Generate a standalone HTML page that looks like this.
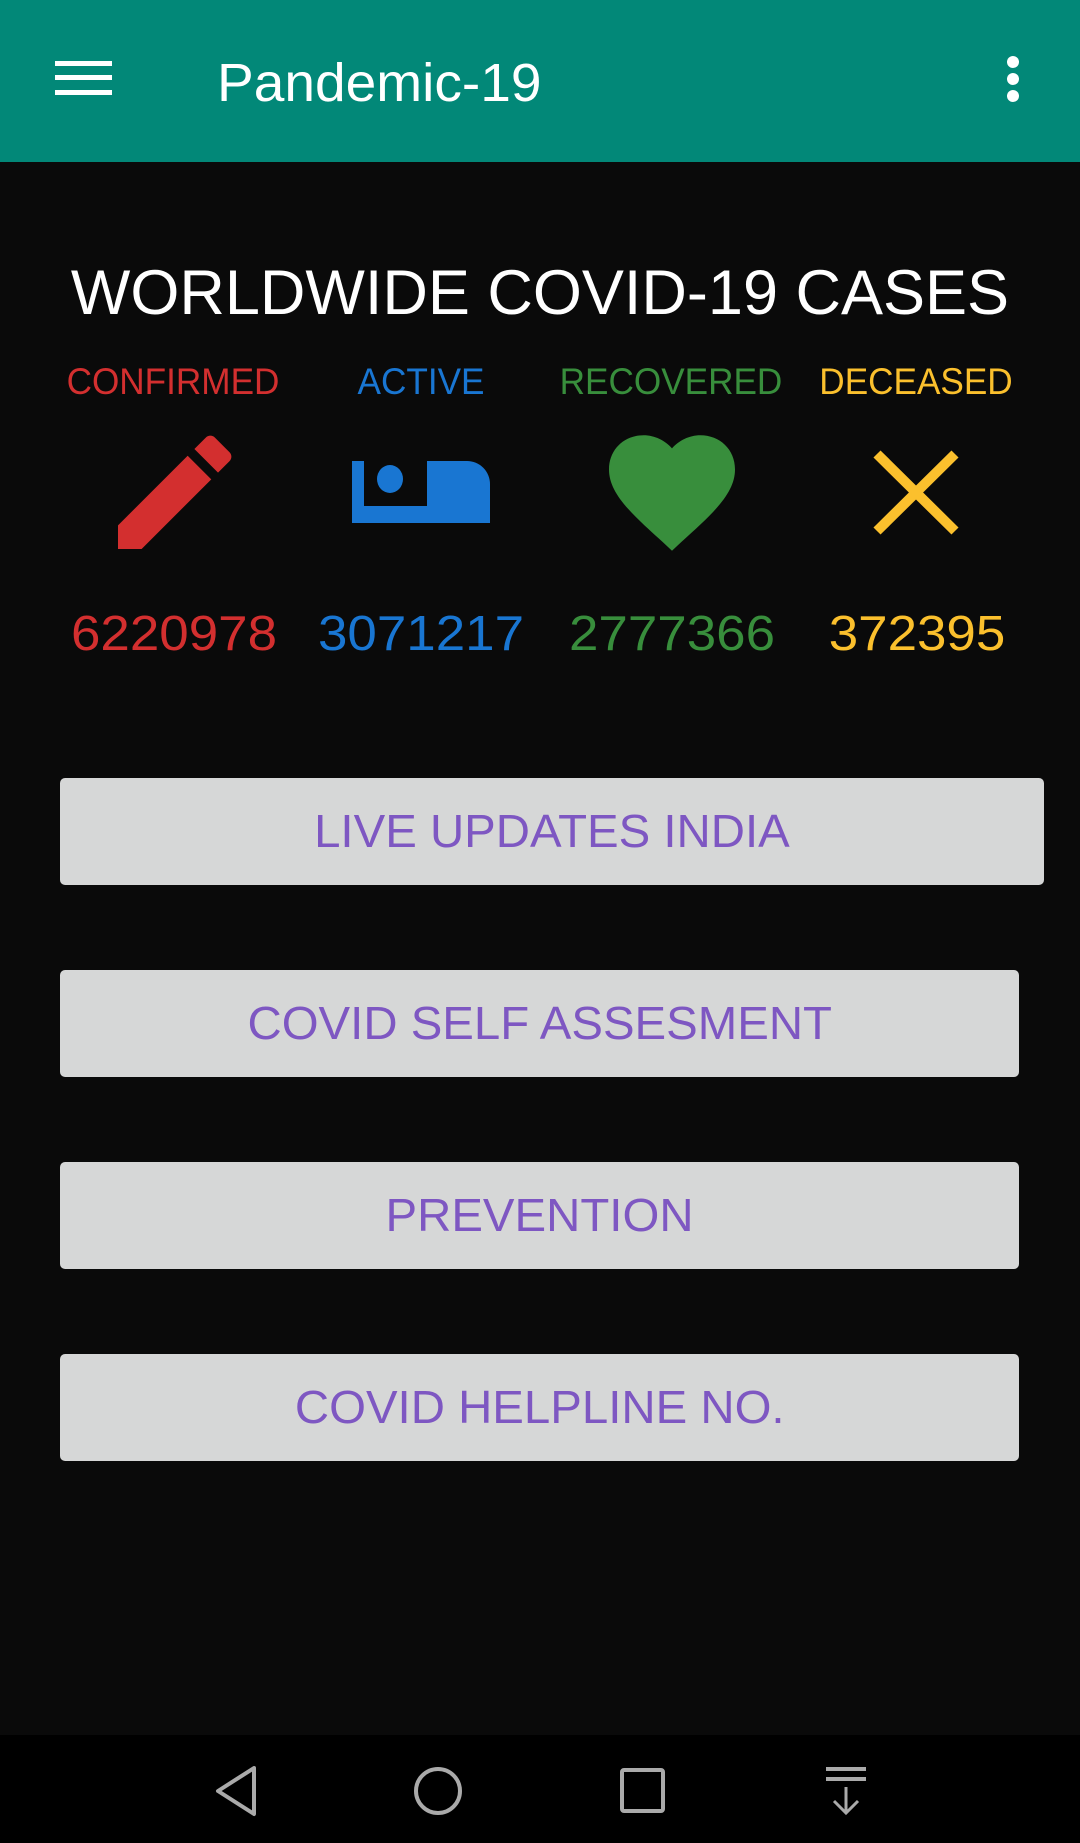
<!DOCTYPE html>
<html><head><meta charset="utf-8"><style>
*{margin:0;padding:0;box-sizing:border-box}
body{width:1080px;height:1843px;background:#0a0a0a;font-family:"Liberation Sans",sans-serif;position:relative;overflow:hidden}
.bar{position:absolute;left:0;top:0;width:1080px;height:162px;background:#028878}
.t{position:absolute;white-space:nowrap}
.c{transform:translateX(-50%) scaleX(0.95)}
.n{transform:translateX(-50%) scaleX(1.08);font-size:49px;top:606px}
.btn{position:absolute;left:60px;background:#d6d7d7;border-radius:5px;color:#7e57c2;font-size:46px;text-align:center;height:107px;line-height:107px}
.btn span{display:inline-block;transform:scaleX(1.03)}
.nav{position:absolute;left:0;top:1735px;width:1080px;height:108px;background:#000}
</style></head><body>
<div class="bar">
 <svg style="position:absolute;left:55px;top:58px" width="58" height="40"><rect x="0" y="3" width="57" height="5" fill="#fff"/><rect x="0" y="17" width="57" height="5" fill="#fff"/><rect x="0" y="32" width="57" height="5" fill="#fff"/></svg>
 <div class="t" style="left:217px;top:52px;font-size:54px;color:#fff;transform:scaleX(1.02);transform-origin:left">Pandemic-19</div>
 <svg style="position:absolute;left:1003px;top:54px" width="20" height="50"><circle cx="10" cy="8" r="6" fill="#fff"/><circle cx="10" cy="25" r="6" fill="#fff"/><circle cx="10" cy="42" r="6" fill="#fff"/></svg>
</div>
<div class="t" style="left:540px;top:257px;font-size:63px;color:#fff;transform:translateX(-50%)">WORLDWIDE COVID-19 CASES</div>
<div class="t c" style="left:173px;top:361px;font-size:37px;color:#d32f2f">CONFIRMED</div>
<div class="t c" style="left:421px;top:361px;font-size:37px;color:#1976d2">ACTIVE</div>
<div class="t c" style="left:671px;top:361px;font-size:37px;color:#388e3c">RECOVERED</div>
<div class="t c" style="left:916px;top:361px;font-size:37px;color:#fbc02d">DECEASED</div>
<svg style="position:absolute;left:118px;top:435px" width="114" height="114" viewBox="3 2.9 18.1 18.1"><path fill="#d32f2f" d="M3 17.25V21h3.75L17.81 9.94l-3.75-3.75L3 17.25z M20.71 7.04c.39-.39.39-1.02 0-1.41l-2.34-2.34c-.39-.39-1.02-.39-1.41 0l-1.83 1.830 3.75 3.75 1.83-1.83z"/></svg>
<svg style="position:absolute;left:352px;top:461px" width="138" height="62" viewBox="0 0 138 62"><path fill="#1976d2" d="M0 0h12v45h63V0h40a23 23 0 0 1 23 23v39H0z"/><ellipse cx="38" cy="18" rx="13" ry="14" fill="#1976d2"/></svg>
<svg style="position:absolute;left:609px;top:435px" width="126" height="116" viewBox="0 0 24 22"><path fill="#388e3c" d="M12 22l-1.7-1.6C4.2 14.9 0 11.1 0 6.5 0 2.7 2.9 0 6.6 0 8.7 0 10.7 1 12 2.5 13.3 1 15.3 0 17.4 0 21.1 0 24 2.7 24 6.5c0 4.6-4.2 8.4-10.3 13.9z"/></svg>
<svg style="position:absolute;left:872px;top:450px" width="88" height="85"><path d="M5 4L83 81M83 4L5 81" stroke="#fbc02d" stroke-width="10"/></svg>
<div class="t n" style="left:174px;color:#d32f2f">6220978</div>
<div class="t n" style="left:421px;color:#1976d2">3071217</div>
<div class="t n" style="left:672px;color:#388e3c">2777366</div>
<div class="t n" style="left:917px;color:#fbc02d">372395</div>
<div class="btn" style="top:778px;width:984px"><span>LIVE UPDATES INDIA</span></div>
<div class="btn" style="top:970px;width:959px"><span>COVID SELF ASSESMENT</span></div>
<div class="btn" style="top:1162px;width:959px"><span>PREVENTION</span></div>
<div class="btn" style="top:1354px;width:959px"><span>COVID HELPLINE NO.</span></div>
<div class="nav">
 <svg style="position:absolute;left:210px;top:30px" width="50" height="52"><path d="M44 3L8 26L44 49Z" fill="none" stroke="#aaa" stroke-width="4" stroke-linejoin="round"/></svg>
 <svg style="position:absolute;left:412px;top:30px" width="52" height="52"><circle cx="26" cy="26" r="22" fill="none" stroke="#aaa" stroke-width="4"/></svg>
 <svg style="position:absolute;left:619px;top:32px" width="48" height="48"><rect x="3" y="3" width="41" height="41" rx="2" fill="none" stroke="#aaa" stroke-width="4"/></svg>
 <svg style="position:absolute;left:824px;top:30px" width="44" height="52"><rect x="2" y="2" width="40" height="4" fill="#aaa"/><rect x="2" y="12" width="40" height="4" fill="#aaa"/><path d="M22 22V48M10 36L22 48L34 36" fill="none" stroke="#aaa" stroke-width="3"/></svg>
</div>
</body></html>
